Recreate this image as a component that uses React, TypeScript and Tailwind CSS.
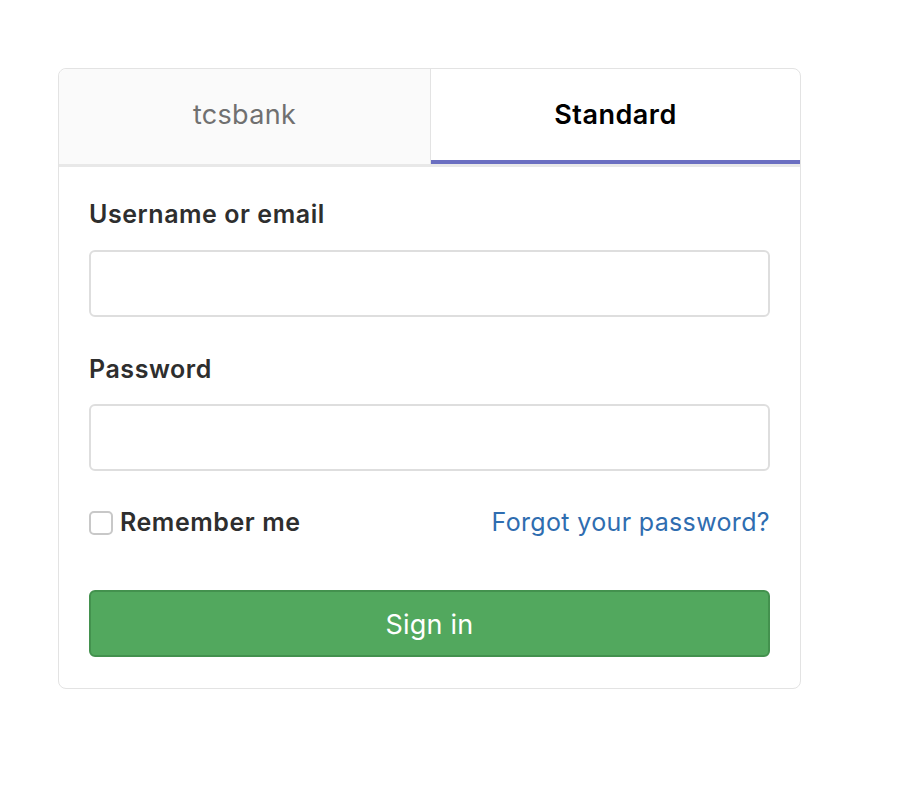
import React from "react";

export default function App() {
  return (
    <div
      className="min-h-[798px] w-[898px] bg-white pt-[68px] pl-[58px]"
      style={{ fontFamily: "Inter, 'Noto Sans', 'Liberation Sans', sans-serif" }}
    >
      <div className="w-[743px] rounded-[8px] border border-[#e3e3e3] bg-white">
        <div className="flex h-[98px] border-b-[3px] border-[#e8e8e8]">
          <div className="flex w-[372px] items-center justify-center rounded-tl-[8px] border-r border-[#e3e3e3] bg-[#fafafa] pb-[2px] text-[27px] tracking-[0.3px] text-[#707070]">
            tcsbank
          </div>
          <div className="flex flex-1 items-center justify-center rounded-tr-[8px] border-b-[4px] border-[#6b6fc1] pt-[2px] text-[27px] font-semibold tracking-[0.5px] text-black">
            Standard
          </div>
        </div>
        <div className="px-[30px] pt-[30px] pb-[31px]">
          <div className="text-[25px] leading-[34px] font-semibold tracking-[0.55px] text-[#2e2e2e]">
            Username or email
          </div>
          <input
            className="mt-[19px] block h-[67px] w-full rounded-[6px] border-2 border-[#dedede] bg-white px-3 outline-none"
            type="text"
          />
          <div className="mt-[35px] text-[25px] leading-[34px] font-semibold tracking-[0.55px] text-[#2e2e2e]">
            Password
          </div>
          <input
            className="mt-[18px] block h-[67px] w-full rounded-[6px] border-2 border-[#dedede] bg-white px-3 outline-none"
            type="password"
          />
          <div className="mt-[35px] flex h-[34px] items-center justify-between">
            <label className="flex items-center gap-[7px] text-[25px] font-semibold tracking-[0.55px] text-[#2e2e2e]">
              <span className="inline-block h-[24px] w-[24px] rounded-[5px] border-2 border-[#c8c8c8] bg-white" />
              Remember me
            </label>
            <a className="text-[25px] tracking-[0.35px] text-[#2f6db0]" href="#">
              Forgot your password?
            </a>
          </div>
          <button className="mt-[50px] flex h-[67px] w-full items-center justify-center rounded-[6px] border-2 border-[#43914e] bg-[#52a85e] pt-[3px] text-[27px] tracking-[0.2px] text-white">
            Sign in
          </button>
        </div>
      </div>
    </div>
  );
}
